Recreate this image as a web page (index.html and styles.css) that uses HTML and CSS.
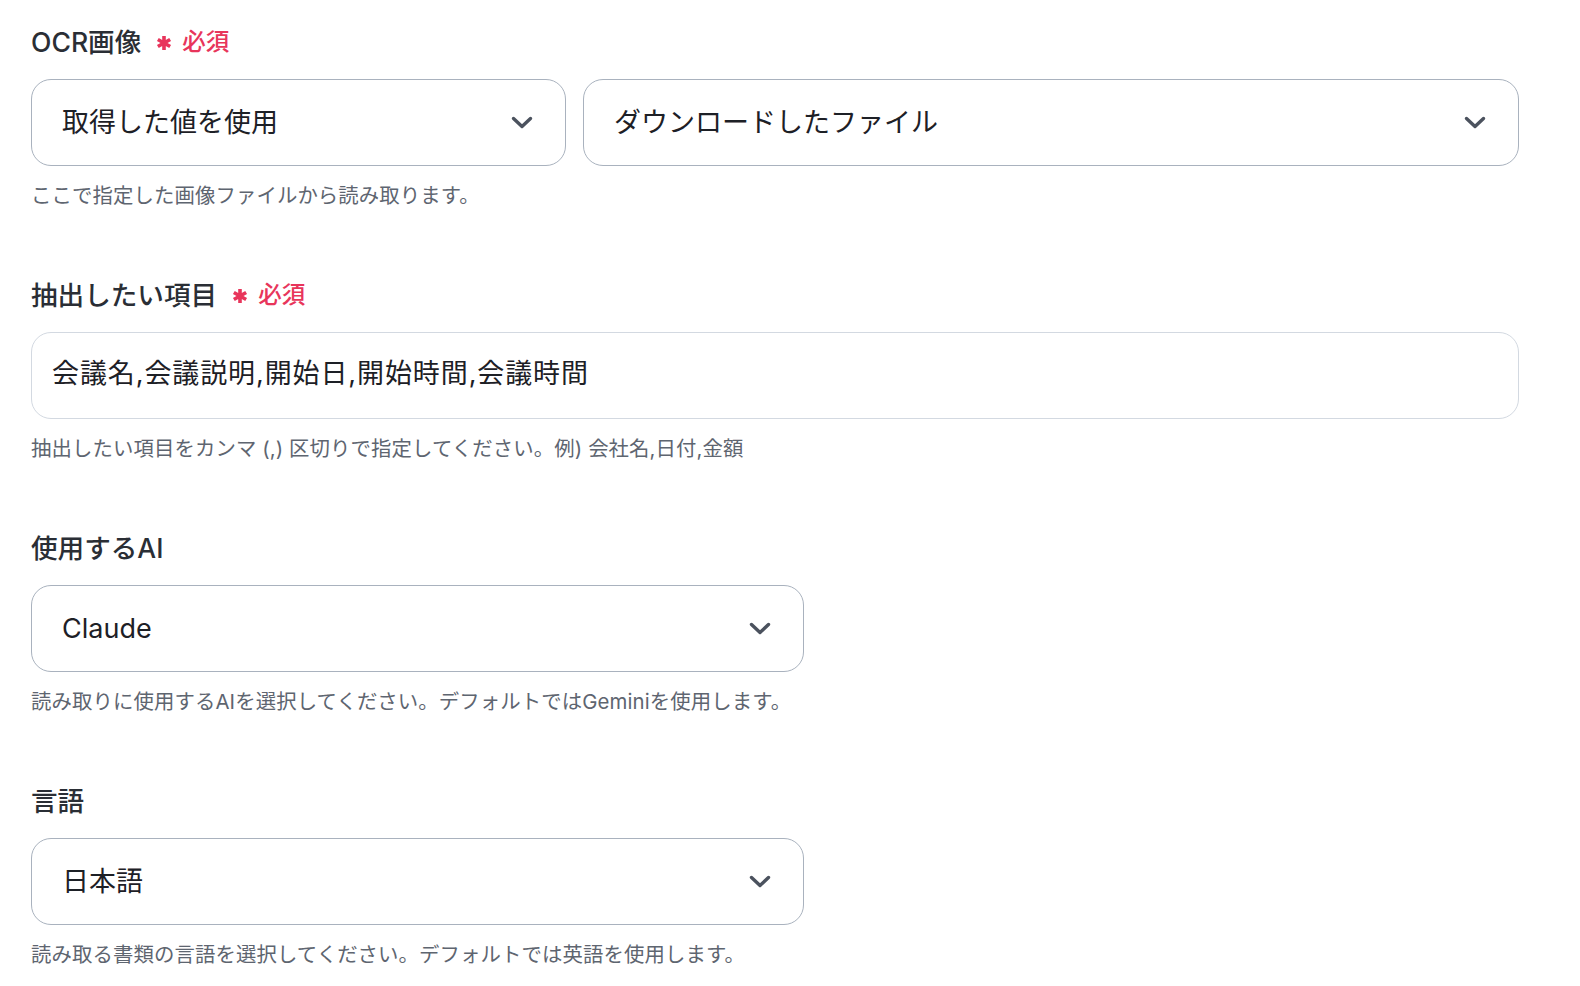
FILE: index.html
```html
<!DOCTYPE html>
<html lang="ja">
<head>
<meta charset="utf-8">
<title>OCR設定</title>
<link rel="stylesheet" href="styles.css">
</head>
<body>
<form class="form">
  <section class="field">
    <div class="label">
      <span class="label-text">OCR画像</span>
      <span class="required">
        <svg class="asterisk" viewBox="0 0 16 16" aria-hidden="true"><path d="M8 0.9V15.1M1.85 4.45L14.15 11.55M1.85 11.55L14.15 4.45"/></svg>
        必須
      </span>
    </div>
    <div class="row">
      <div class="select select-narrow">
        <span class="value">取得した値を使用</span>
        <svg class="chevron" viewBox="0 0 22 13" aria-hidden="true"><path d="M2.5 2.5L11 10.5L19.5 2.5"/></svg>
      </div>
      <div class="select select-wide">
        <span class="value">ダウンロードしたファイル</span>
        <svg class="chevron" viewBox="0 0 22 13" aria-hidden="true"><path d="M2.5 2.5L11 10.5L19.5 2.5"/></svg>
      </div>
    </div>
    <p class="help">ここで指定した画像ファイルから読み取ります。</p>
  </section>

  <section class="field">
    <div class="label">
      <span class="label-text">抽出したい項目</span>
      <span class="required">
        <svg class="asterisk" viewBox="0 0 16 16" aria-hidden="true"><path d="M8 0.9V15.1M1.85 4.45L14.15 11.55M1.85 11.55L14.15 4.45"/></svg>
        必須
      </span>
    </div>
    <div class="input">会議名,会議説明,開始日,開始時間,会議時間</div>
    <p class="help">抽出したい項目をカンマ (,) 区切りで指定してください。例) 会社名,日付,金額</p>
  </section>

  <section class="field">
    <div class="label">
      <span class="label-text">使用するAI</span>
    </div>
    <div class="select select-half">
      <span class="value">Claude</span>
      <svg class="chevron" viewBox="0 0 22 13" aria-hidden="true"><path d="M2.5 2.5L11 10.5L19.5 2.5"/></svg>
    </div>
    <p class="help">読み取りに使用するAIを選択してください。デフォルトではGeminiを使用します。</p>
  </section>

  <section class="field">
    <div class="label">
      <span class="label-text">言語</span>
    </div>
    <div class="select select-half">
      <span class="value">日本語</span>
      <svg class="chevron" viewBox="0 0 22 13" aria-hidden="true"><path d="M2.5 2.5L11 10.5L19.5 2.5"/></svg>
    </div>
    <p class="help">読み取る書類の言語を選択してください。デフォルトでは英語を使用します。</p>
  </section>
</form>
</body>
</html>
```

FILE: styles.css
```css
html, body {
  margin: 0;
  padding: 0;
  background: #ffffff;
}

body {
  font-family: Inter, "Noto Sans CJK JP", sans-serif;
  color: #1f2329;
}

.form {
  padding: 24px 0 0 31px;
  width: 1488px;
}

.field {
  margin-bottom: 67px;
}

.field:last-child {
  margin-bottom: 0;
}

.label {
  display: flex;
  align-items: center;
  height: 36px;
  margin-bottom: 19px;
}

.label-text {
  font-size: 26.6px;
  font-weight: 500;
  line-height: 36px;
  color: #2a2e35;
}

.required {
  display: inline-flex;
  align-items: center;
  margin-left: 15px;
  font-size: 23.5px;
  line-height: 36px;
  font-weight: 500;
  color: #e8355b;
}

.asterisk {
  width: 16px;
  height: 16px;
  margin-right: 10px;
  margin-top: 1px;
  fill: none;
  stroke: #e8355b;
  stroke-width: 3.6;
}

.row {
  display: flex;
  gap: 17px;
}

.select {
  box-sizing: border-box;
  height: 87px;
  display: flex;
  align-items: center;
  justify-content: space-between;
  padding: 0 32px 0 30px;
  border: 1px solid #a9b2be;
  border-radius: 20px;
  background: #ffffff;
}

.select-narrow {
  width: 535px;
}

.select-wide {
  flex: 1;
}

.select-half {
  width: 773px;
}

.value {
  font-size: 27px;
  line-height: 36px;
  color: #1d2026;
}

.chevron {
  width: 22px;
  height: 13px;
  fill: none;
  stroke: #4b525e;
  stroke-width: 3.4;
  stroke-linecap: round;
  stroke-linejoin: round;
}

.input {
  box-sizing: border-box;
  height: 87px;
  display: flex;
  align-items: center;
  padding: 0 20px 4px;
  border: 1px solid #d3d9e1;
  border-radius: 20px;
  font-size: 27px;
  line-height: 36px;
  letter-spacing: 0.9px;
  color: #1d2026;
}

.help {
  margin: 16px 0 0;
  font-size: 20.4px;
  line-height: 28px;
  letter-spacing: 0.1px;
  color: #5e6570;
}
```
